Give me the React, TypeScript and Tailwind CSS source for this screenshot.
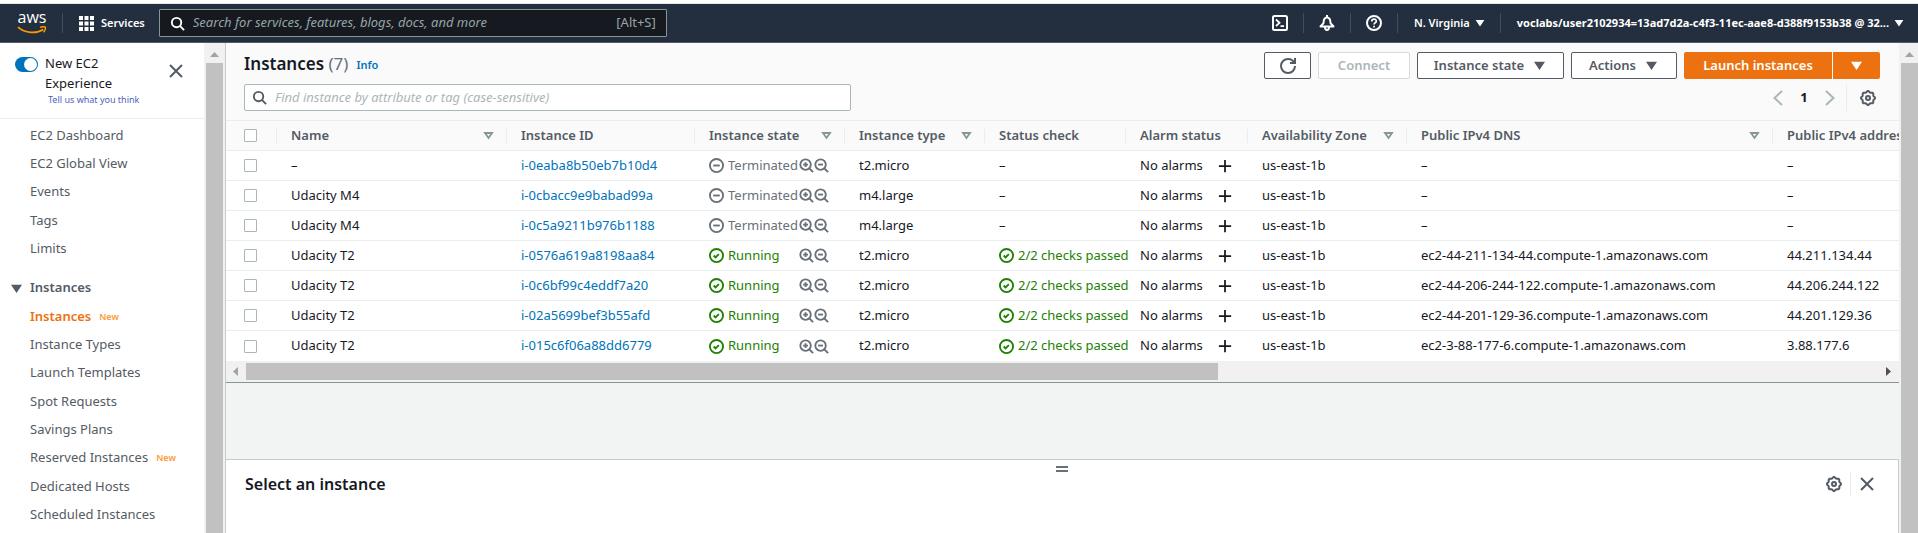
import type { ReactNode } from "react";

type IconProps = { size?: number; className?: string; width?: number; children: ReactNode };

function Icon({ size = 16, className = "", width = 2, children }: IconProps) {
  return (
    <svg
      viewBox="0 0 16 16"
      width={size}
      height={size}
      fill="none"
      stroke="currentColor"
      strokeWidth={width}
      aria-hidden="true"
      className={`shrink-0 ${className}`}
    >
      {children}
    </svg>
  );
}

const SearchIcon = ({ size = 16, className = "" }: { size?: number; className?: string }) => (
  <Icon size={size} className={className}>
    <circle cx="7" cy="7" r="5" />
    <path d="m15 15-4.5-4.5" />
  </Icon>
);

const CaretDown = ({ size = 14, className = "" }: { size?: number; className?: string }) => (
  <Icon size={size} className={className}>
    <path d="M4 5h8l-4 6-4-6z" fill="currentColor" />
  </Icon>
);

const SortIcon = () => (
  <Icon size={15} className="text-[#879596]">
    <path d="M4.3 5.3h7.4L8 10.600z" />
  </Icon>
);

const CloseIcon = () => (
  <Icon size={16}>
    <path d="m2 2 12 12M14 2 2 14" />
  </Icon>
);

const gearOutline =
  Array.from({ length: 97 }, (_, i) => {
    const a = (i / 96) * Math.PI * 2;
    const r = 6.4 + 0.6 * Math.cos(a * 8);
    return `${i ? "L" : "M"}${(8 + r * Math.cos(a)).toFixed(2)} ${(8 + r * Math.sin(a)).toFixed(2)}`;
  }).join("") + "Z";

const GearIcon = () => (
  <Icon size={16}>
    <path d={gearOutline} strokeLinejoin="round" />
    <circle cx="8" cy="8" r="2" />
  </Icon>
);

const ZoomGlyph = ({ plus }: { plus: boolean }) => (
  <Icon size={15}>
    <circle cx="7" cy="7" r="5.6" />
    <path d="m15 15-4-4" />
    <path d={plus ? "M7 4.4v5.2M4.4 7h5.2" : "M4.4 7h5.2"} strokeWidth="2" />
  </Icon>
);

type Instance = { name: string; id: string; running: boolean; type: string; dns: string; ip: string };

const instances: Instance[] = [
  { name: "–", id: "i-0eaba8b50eb7b10d4", running: false, type: "t2.micro", dns: "–", ip: "–" },
  { name: "Udacity M4", id: "i-0cbacc9e9babad99a", running: false, type: "m4.large", dns: "–", ip: "–" },
  { name: "Udacity M4", id: "i-0c5a9211b976b1188", running: false, type: "m4.large", dns: "–", ip: "–" },
  { name: "Udacity T2", id: "i-0576a619a8198aa84", running: true, type: "t2.micro", dns: "ec2-44-211-134-44.compute-1.amazonaws.com", ip: "44.211.134.44" },
  { name: "Udacity T2", id: "i-0c6bf99c4eddf7a20", running: true, type: "t2.micro", dns: "ec2-44-206-244-122.compute-1.amazonaws.com", ip: "44.206.244.122" },
  { name: "Udacity T2", id: "i-02a5699bef3b55afd", running: true, type: "t2.micro", dns: "ec2-44-201-129-36.compute-1.amazonaws.com", ip: "44.201.129.36" },
  { name: "Udacity T2", id: "i-015c6f06a88dd6779", running: true, type: "t2.micro", dns: "ec2-3-88-177-6.compute-1.amazonaws.com", ip: "3.88.177.6" },
];

const columns = [
  { label: "Name", sort: true, width: "w-[230px]" },
  { label: "Instance ID", sort: false, width: "w-[188px]" },
  { label: "Instance state", sort: true, width: "w-[150px]" },
  { label: "Instance type", sort: true, width: "w-[140px]" },
  { label: "Status check", sort: false, width: "w-[141px]" },
  { label: "Alarm status", sort: false, width: "w-[122px]" },
  { label: "Availability Zone", sort: true, width: "w-[159px]" },
  { label: "Public IPv4 DNS", sort: true, width: "w-[366px]" },
  { label: "Public IPv4 address", sort: false, width: "w-[200px]" },
];

const Positive = () => (
  <Icon size={15}>
    <circle cx="8" cy="8" r="7" />
    <path d="m5 8 2 2 3.5-3.5" />
  </Icon>
);

const Stopped = () => (
  <Icon size={15}>
    <circle cx="8" cy="8" r="7" />
    <path d="M11.5 8h-7" />
  </Icon>
);

function Checkbox({ label }: { label: string }) {
  return (
    <input
      type="checkbox"
      aria-label={label}
      className="block size-[13px] appearance-none rounded-[1px] border border-[#aab7b8] bg-white checked:bg-[#0073bb]"
    />
  );
}

function NavDivider() {
  return <span className="h-5 w-px bg-[#414d5c]" />;
}

function TopBar() {
  return (
    <header className="mt-1 flex h-[39px] items-center border-b border-[#545b64] bg-[#232f3e] text-white outline outline-1 outline-[#d5dbdb]/60">
      <a href="#home" aria-label="AWS home" className="ml-4 flex w-8 flex-col items-center">
        <span className="h-[14px] font-['Open_Sans',sans-serif] text-[16px] font-medium leading-[11px]">aws</span>
        <svg viewBox="0 0 30 8" width="30" height="8" fill="none" stroke="#ff9900" aria-hidden="true">
          <path d="M1 1.2C8 7.4 19.500 8 26.300 3.500" strokeWidth="1.800" />
          <path d="M23 1.400c2-.9 4.800-.9 5.400-.2.500.8-.4 3.600-1.900 5" strokeWidth="1.400" />
        </svg>
      </a>
      <span className="ml-[14px] mr-4 h-5 w-px bg-[#414d5c]" />
      <button type="button" className="flex items-center gap-[7px] text-[11px] font-semibold">
        <svg viewBox="0 0 15 15" width="15" height="15" fill="currentColor" aria-hidden="true">
          {[0, 5.5, 11].map((y) => [0, 5.5, 11].map((x) => <rect key={`${x}-${y}`} x={x} y={y} width="4" height="4" />))}
        </svg>
        Services
      </button>
      <label className="ml-[14px] flex h-7 w-[508px] items-center rounded-[1px] border border-[#879596] bg-[#16191f] px-[10px]">
        <SearchIcon size={15} />
        <input
          type="search"
          aria-label="Search AWS"
          placeholder="Search for services, features, blogs, docs, and more"
          className="ml-2 min-w-0 flex-1 bg-transparent text-[13px] italic outline-none placeholder:text-[#95a5a6]"
        />
        <span className="text-[13px] text-[#95a5a6]">[Alt+S]</span>
      </label>
      <div className="ml-auto flex items-center">
        <button type="button" aria-label="CloudShell" className="mr-[15px]">
          <Icon size={16}>
            <rect x="1" y="1" width="14" height="14" rx="1.500" />
            <path d="m4 4.500 3.500 3.300L4 11M8.500 11.200H12" strokeWidth="1.800" />
          </Icon>
        </button>
        <NavDivider />
        <button type="button" aria-label="Notifications" className="mx-[15px]">
          <Icon size={16}>
            <path d="M1.500 11.500h13L11.500 8.200C11.500 4.500 10.500 2.500 8 2.500S4.500 4.500 4.500 8.200z" strokeLinejoin="round" />
            <path d="M8 0v2.500M6 12c0 4 4 4 4 0" />
          </Icon>
        </button>
        <NavDivider />
        <button type="button" aria-label="Help" className="mx-[15px]">
          <Icon size={16}>
            <circle cx="8" cy="8" r="7" />
            <path d="M5.800 6.400C5.800 3.300 10.400 3.500 10.300 6.200 10.300 7.700 8 7.800 8 9.500M8 10.800v1.700" strokeWidth="1.700" />
          </Icon>
        </button>
        <NavDivider />
        <button type="button" className="ml-4 mr-[14px] flex items-center gap-1 text-[11px] font-semibold">
          N. Virginia
          <CaretDown size={12} />
        </button>
        <NavDivider />
        <button type="button" className="ml-4 mr-[13px] flex items-center gap-1 text-[11px] font-bold">
          voclabs/user2102934=13ad7d2a-c4f3-11ec-aae8-d388f9153b38 @ 32...
          <CaretDown size={12} />
        </button>
      </div>
    </header>
  );
}

function SideLink({ label, isNew = false, active = false }: { label: string; isNew?: boolean; active?: boolean }) {
  return (
    <li className="flex h-7 items-center gap-2 nth-[3n+1]:h-[29px]">
      <a href="#nav" className={active ? "font-semibold text-[#ec7211]" : "text-[#545b64]"}>
        {label}
      </a>
      {isNew && <span className="text-[9px] font-semibold text-[#ff9933]">New</span>}
    </li>
  );
}

function Sidebar() {
  return (
    <aside className="flex w-[204px] shrink-0 flex-col bg-white text-[13px]">
      <div className="flex h-[76px] items-start border-b border-[#eaeded] pl-[15px] pr-5 pt-[10px]">
        <label className="flex items-start gap-[7px] text-[14px] leading-5 text-[#16191f]">
          <input type="checkbox" defaultChecked className="peer sr-only" />
          <span className="mt-1 flex h-[15px] w-[23px] shrink-0 justify-end rounded-full bg-[#0073bb] p-px">
            <span className="size-[13px] rounded-full bg-white" />
          </span>
          <span className="w-24">
            <span className="block text-[13px]">New EC2 Experience</span>
            <a href="#feedback" className="ml-[3px] block whitespace-nowrap text-[9px] leading-[14px] text-[#4d5fc0]">
              Tell us what you think
            </a>
          </span>
        </label>
        <button type="button" aria-label="Close navigation" className="ml-auto mt-[10px] text-[#545b64]">
          <CloseIcon />
        </button>
      </div>
      <nav aria-label="EC2" className="pl-[30px]">
        <ul className="pt-[2px]">
          <SideLink label="EC2 Dashboard" />
          <SideLink label="EC2 Global View" />
          <SideLink label="Events" />
          <SideLink label="Tags" />
          <SideLink label="Limits" />
        </ul>
        <button type="button" className="-ml-[21px] mt-[11px] flex h-7 items-center gap-[6px] font-semibold text-[#545b64]">
          <CaretDown size={15} />
          Instances
        </button>
        <ul>
          <SideLink label="Instances" isNew active />
          <SideLink label="Instance Types" />
          <SideLink label="Launch Templates" />
          <SideLink label="Spot Requests" />
          <SideLink label="Savings Plans" />
          <SideLink label="Reserved Instances" isNew />
          <SideLink label="Dedicated Hosts" />
          <SideLink label="Scheduled Instances" />
        </ul>
      </nav>
    </aside>
  );
}

function VerticalScrollbar({ className }: { className: string }) {
  return (
    <div aria-hidden="true" className={`flex shrink-0 flex-col bg-[#f1f1f1] ${className}`}>
      <svg viewBox="0 0 17 20" width="17" height="20" fill="#a3a3a3">
        <path d="M4 14h9L8.500 9z" />
      </svg>
      <div className="flex-1 bg-[#c1c1c1]" />
    </div>
  );
}

const outlineButton =
  "flex h-[27px] items-center justify-center rounded-[2px] border bg-white text-[13px] font-semibold";

function Toolbar() {
  return (
    <div className="h-[77px] bg-[#fafafa] pl-[18px] pr-[19px] pt-[9px]">
      <div className="flex h-[27px] items-start">
        <h1 className="text-[17px] font-semibold leading-6 text-[#16191f]">
          Instances <span className="font-normal text-[#687078]">(7)</span>
        </h1>
        <a href="#info" className="ml-2 mt-[5px] text-[11px] font-semibold leading-4 text-[#0073bb]">
          Info
        </a>
        <div className="ml-auto flex gap-[7px] text-[#545b64]">
          <button type="button" aria-label="Refresh" className={`${outlineButton} w-[47px] border-[#545b64]`}>
            <Icon size={16}>
              <path d="M10 5h5V0" />
              <path d="M15 8a6.957 6.957 0 0 1-7 7 6.957 6.957 0 0 1-7-7 6.957 6.957 0 0 1 7-7 6.870 6.870 0 0 1 6.300 4" />
            </Icon>
          </button>
          <button type="button" disabled className={`${outlineButton} w-[92px] border-[#d5dbdb] text-[#aab7b8]`}>
            Connect
          </button>
          <button type="button" className={`${outlineButton} w-[147px] gap-2 border-[#545b64]`}>
            Instance state
            <CaretDown size={15} />
          </button>
          <button type="button" className={`${outlineButton} w-[106px] gap-2 border-[#545b64]`}>
            Actions
            <CaretDown size={15} />
          </button>
          <div className="flex gap-px text-white">
            <button type="button" className="h-[27px] w-[148px] rounded-l-[2px] bg-[#ec7211] text-[13px] font-semibold">
              Launch instances
            </button>
            <button
              type="button"
              aria-label="More launch options"
              className="flex h-[27px] w-[47px] items-center justify-center rounded-r-[2px] bg-[#ec7211]"
            >
              <CaretDown size={15} />
            </button>
          </div>
        </div>
      </div>
      <div className="mt-[5px] flex h-[27px] items-center">
        <label className="flex h-[27px] w-[607px] items-center rounded-[2px] border border-[#aab7b8] bg-white px-[7px] text-[#545b64]">
          <SearchIcon size={15} />
          <input
            type="search"
            aria-label="Find instance"
            placeholder="Find instance by attribute or tag (case-sensitive)"
            className="ml-2 min-w-0 flex-1 bg-transparent text-[13px] italic outline-none placeholder:text-[#aab7b8]"
          />
        </label>
        <div className="ml-auto flex items-center">
          <button type="button" aria-label="Previous page" className="text-[#aab7b8]">
            <Icon size={16}>
              <path d="M12 1 4.500 8l7.500 7" />
            </Icon>
          </button>
          <span className="w-9 text-center text-[13px] font-bold text-[#16191f]">1</span>
          <button type="button" aria-label="Next page" className="text-[#aab7b8]">
            <Icon size={16}>
              <path d="m4 1 7.500 7L4 15" />
            </Icon>
          </button>
          <span className="ml-2 mr-[13px] h-[27px] w-px bg-[#eaeded]" />
          <button type="button" aria-label="Preferences" className="mr-1 text-[#545b64]">
            <GearIcon />
          </button>
        </div>
      </div>
    </div>
  );
}

function InstanceTable() {
  return (
    <div className="overflow-hidden bg-white">
      <table className="w-[1746px] table-fixed border-separate border-spacing-0 text-left text-[13px] text-[#16191f]">
        <thead className="bg-[#fafafa]">
          <tr className="h-[31px]">
            <th className="w-[50px] border-y border-[#eaeded] p-0 pl-[18px]">
              <Checkbox label="Select all instances" />
            </th>
            {columns.map((c) => (
              <th key={c.label} className={`${c.width} border-y border-[#eaeded] p-0 font-semibold text-[#545b64]`}>
                <div className="flex h-[14px] items-center justify-between whitespace-nowrap border-l border-[#eaeded] pl-[14px] pr-[10px]">
                  {c.label}
                  {c.sort && <SortIcon />}
                </div>
              </th>
            ))}
          </tr>
        </thead>
        <tbody>
          {instances.map((row) => (
            <tr
              key={row.id}
              className="h-[30px] [&>td]:whitespace-nowrap [&>td]:border-b [&>td]:border-[#eaeded] [&>td]:p-0 [&>td]:pl-[15px] last:[&>td]:border-b-0"
            >
              <td>
                <div className="pl-[3px]">
                  <Checkbox label={`Select ${row.id}`} />
                </div>
              </td>
              <td>{row.name}</td>
              <td>
                <a href="#instance" className="text-[#0073bb]">
                  {row.id}
                </a>
              </td>
              <td>
                <div className={`flex items-center ${row.running ? "text-[#1d8102]" : "text-[#687078]"}`}>
                  {row.running ? <Positive /> : <Stopped />}
                  <span className="ml-1 w-[71px]">{row.running ? "Running" : "Terminated"}</span>
                  <span className="flex text-[#687078]">
                    <button type="button" aria-label="Filter by this state">
                      <ZoomGlyph plus />
                    </button>
                    <button type="button" aria-label="Exclude this state">
                      <ZoomGlyph plus={false} />
                    </button>
                  </span>
                </div>
              </td>
              <td>{row.type}</td>
              <td>
                {row.running ? (
                  <div className="flex items-center gap-1 text-[#1d8102]">
                    <Positive />
                    2/2 checks passed
                  </div>
                ) : (
                  "–"
                )}
              </td>
              <td>
                <div className="flex items-center justify-between pr-[15px]">
                  No alarms
                  <button type="button" aria-label="Add alarm">
                    <Icon size={14}>
                      <path d="M8 1v14M1 8h14" />
                    </Icon>
                  </button>
                </div>
              </td>
              <td>us-east-1b</td>
              <td>{row.dns}</td>
              <td>{row.ip}</td>
            </tr>
          ))}
        </tbody>
      </table>
      <div aria-hidden="true" className="flex h-[21px] items-center bg-[#f1f1f1]">
        <svg viewBox="0 0 20 17" width="20" height="17" fill="#a3a3a3" className="shrink-0">
          <path d="M12 4v9L7 8.500z" />
        </svg>
        <div className="flex h-[17px] flex-1">
          <div className="w-[59.5%] bg-[#c1c1c1]" />
        </div>
        <svg viewBox="0 0 20 17" width="20" height="17" fill="#505050" className="shrink-0">
          <path d="M7 4v9l5-4.500z" />
        </svg>
      </div>
    </div>
  );
}

function DetailPanel() {
  return (
    <section className="h-[74px] border-r border-t border-[#c5cccd] bg-white">
      <div className="flex h-3 items-center justify-center">
        <button type="button" aria-label="Resize panel" className="mt-[6px] h-[6px] w-3 border-y-2 border-[#687078]" />
      </div>
      <div className="flex h-6 items-center pl-[19px] pr-[23px]">
        <h2 className="text-[16px] font-semibold text-[#16191f]">Select an instance</h2>
        <div className="ml-auto flex items-center text-[#545b64]">
          <button type="button" aria-label="Panel preferences">
            <GearIcon />
          </button>
          <span className="mx-2 h-6 w-px bg-[#eaeded]" />
          <button type="button" aria-label="Close panel">
            <CloseIcon />
          </button>
        </div>
      </div>
    </section>
  );
}

export default function App() {
  return (
    <div className="flex min-h-screen flex-col bg-white font-['Noto_Sans',sans-serif]">
      <TopBar />
      <div className="flex flex-1">
        <Sidebar />
        <VerticalScrollbar className="w-[21px] px-[2px]" />
        <main className="flex min-w-0 flex-1 flex-col border-l border-[#c5cccd] bg-[#f2f3f3]">
          <Toolbar />
          <InstanceTable />
          <div className="flex-1 border-t border-[#879596]" />
          <DetailPanel />
        </main>
        <VerticalScrollbar className="w-[19px] pl-[2px]" />
      </div>
    </div>
  );
}
